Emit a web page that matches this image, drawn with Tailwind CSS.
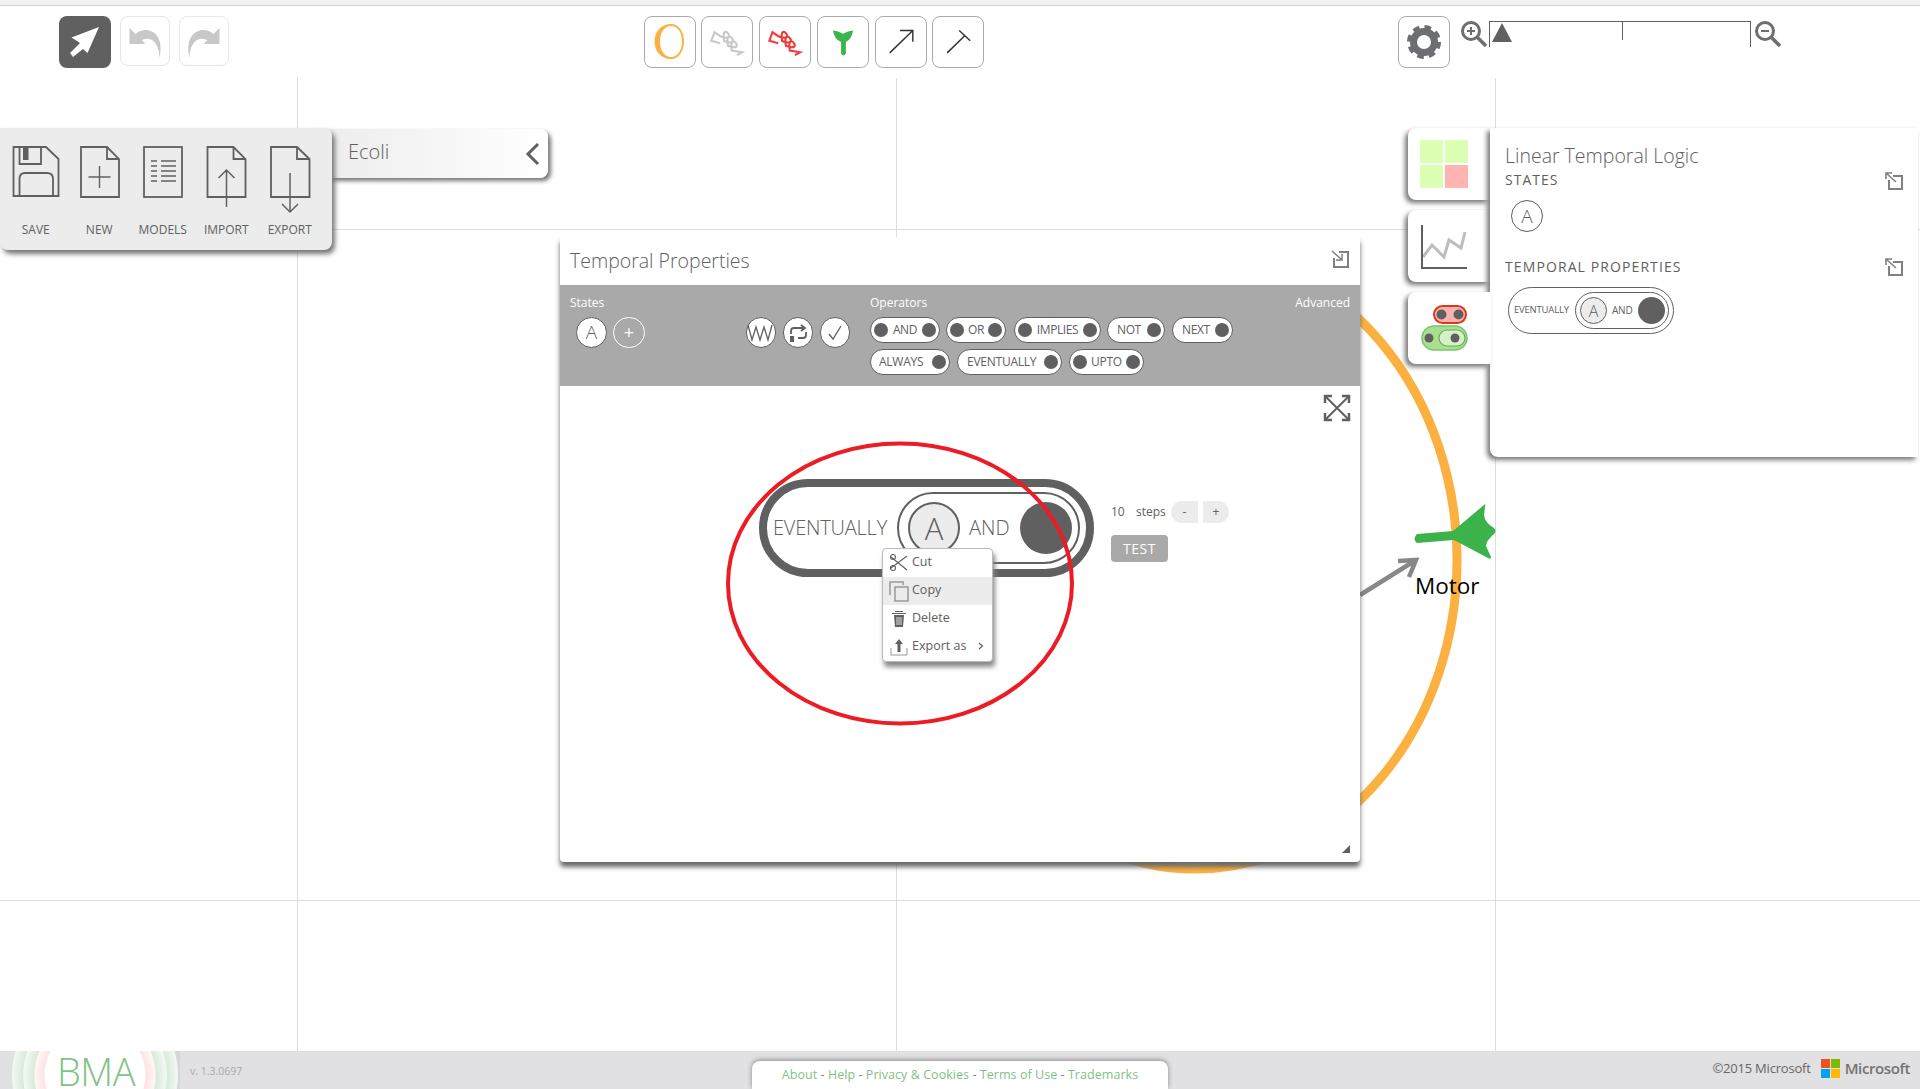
<!DOCTYPE html>
<html lang="en">
<head>
  <meta charset="utf-8" />
  <title>BMA</title>
  <script src="https://cdn.jsdelivr.net/npm/@tailwindcss/browser@4"></script>
</head>
<body class="bg-white font-['Open_Sans',sans-serif] text-[#606060]">
<div class="relative w-[1920px] h-[1089px] overflow-hidden flex flex-col">
  <!-- top strip -->
  <div class="h-[6px] shrink-0 bg-[#f1f1f1] border-b border-[#d4d4d4]"></div>

  <!-- toolbar -->
  <header class="h-[72px] shrink-0 flex items-start pt-[10px] pl-[59px]">
    <button class="w-[52px] h-[52px] rounded-lg bg-[#606060] flex items-center justify-center">
      <svg width="52" height="52" viewBox="0 0 52 52"><path d="M40 11 L12.5 21.5 L21 27 L11 37 L14 41 L24 33 L28.5 37 Z" fill="#fff"/></svg>
    </button>
    <button class="ml-[9px] w-[50px] h-[50px] rounded-lg border border-[#e6e6e6]">
      <svg width="48" height="48" viewBox="0 0 47 48"><path d="M8 11 V27 H24 Z" fill="#c8c8c8"/><path d="M14 17 C24 8 44 14 38 41 C38 25 28 18 19 24 Z" fill="#c8c8c8"/></svg>
    </button>
    <button class="ml-[9px] w-[50px] h-[50px] rounded-lg border border-[#e6e6e6]">
      <svg width="48" height="48" viewBox="0 0 47 48"><g transform="translate(47 0) scale(-1 1)"><path d="M8 11 V27 H24 Z" fill="#c8c8c8"/><path d="M14 17 C24 8 44 14 38 41 C38 25 28 18 19 24 Z" fill="#c8c8c8"/></g></svg>
    </button>

    <div class="ml-[415px] flex gap-[5px]">
      <button class="w-[52px] h-[52px] rounded-lg border border-[#aaa]">
        <svg width="50" height="50" viewBox="0 0 50 50"><path d="M26 7 C34 7 39 15 39 24.5 C39 34 34 42 26 42 C16 42 9.5 34 9.5 24.5 C9.5 15 16 7 26 7 Z M26 9 C19 9 15 16 15 24.5 C15 33 19 40 26 40 C33 40 37 33 37 24.5 C37 16 33 9 26 9 Z" fill="#fbb040" fill-rule="evenodd"/></svg>
      </button>
      <button class="w-[52px] h-[52px] rounded-lg border border-[#aaa]">
        <svg width="50" height="50" viewBox="0 0 52 52"><path d="M19 27.3 L9.7 24.7 L13 15.7 L19 20 c20.1 7.6 0.1 -17.4 4 5 c20.1 7.6 0.1 -17.4 4 5 c20.1 7.6 0.1 -17.4 4 5 L41.7 36.7 L36.3 39.7" fill="none" stroke="#c8c8c8" stroke-width="2.200"/></svg>
      </button>
      <button class="ml-[1px] w-[52px] h-[52px] rounded-lg border border-[#aaa]">
        <svg width="50" height="50" viewBox="0 0 52 52"><path d="M19 27.3 L9.7 24.7 L13 15.7 L19 20 c20.1 7.6 0.1 -17.4 4 5 c20.1 7.6 0.1 -17.4 4 5 c20.1 7.6 0.1 -17.4 4 5 L41.7 36.7 L36.3 39.7" fill="none" stroke="#ef3b3b" stroke-width="2.200"/></svg>
      </button>
      <button class="ml-[1px] w-[52px] h-[52px] rounded-lg border border-[#aaa]">
        <svg width="50" height="50" viewBox="0 0 52 52"><path d="M15.5 14 L21 15 L26 17.5 L31 15 L36.5 14 Q35 23 29 26 V38 Q26.5 42 24 38 V26 Q17 23 15.5 14 Z" fill="#39b54a"/></svg>
      </button>
      <button class="ml-[1px] w-[52px] h-[52px] rounded-lg border border-[#aaa]">
        <svg width="50" height="50" viewBox="0 0 52 52"><path d="M14.3 37.3 L38.3 14 M25 14 H38.3 V25.7" fill="none" stroke="#333" stroke-width="1.500"/></svg>
      </button>
      <button class="w-[52px] h-[52px] rounded-lg border border-[#aaa]">
        <svg width="50" height="50" viewBox="0 0 52 52"><path d="M14.7 37.3 L33 19.5 M27.3 14 L38.7 24.7" fill="none" stroke="#333" stroke-width="1.500"/></svg>
      </button>
    </div>

    <button class="ml-[414px] w-[52px] h-[52px] rounded-lg border border-[#aaa] shrink-0 flex items-center justify-center">
      <svg width="38" height="38" viewBox="0 0 38 38"><circle cx="19" cy="19" r="10.5" fill="none" stroke="#6d6e71" stroke-width="7"/><circle cx="19" cy="19" r="14.5" fill="none" stroke="#6d6e71" stroke-width="5" stroke-dasharray="6.4 5"/></svg>
    </button>
    <svg class="ml-[10px] mt-[4px] shrink-0" width="28" height="28" viewBox="0 0 28 28"><circle cx="11" cy="11" r="8.5" fill="none" stroke="#6d6e71" stroke-width="3"/><path d="M17 17 L26 26" stroke="#6d6e71" stroke-width="3.500"/><path d="M11 7 V15 M7 11 H15" stroke="#6d6e71" stroke-width="2"/></svg>
    <div class="relative ml-[1px] mt-[5px] w-[262px] h-[26px] border-t border-l border-r border-[#606060] shrink-0">
      <div class="absolute left-[2px] top-[1px] w-0 h-0 border-l-[10px] border-r-[10px] border-b-[19px] border-l-transparent border-r-transparent border-b-[#606060]"></div>
      <div class="absolute left-[132px] top-0 w-px h-[18px] bg-[#606060]"></div>
    </div>
    <svg class="ml-[3px] mt-[4px] shrink-0" width="28" height="28" viewBox="0 0 28 28"><circle cx="11" cy="11" r="8.5" fill="none" stroke="#6d6e71" stroke-width="3"/><path d="M17 17 L26 26" stroke="#6d6e71" stroke-width="3.500"/><path d="M7 11 H15" stroke="#6d6e71" stroke-width="2"/></svg>
  </header>

  <!-- free canvas -->
  <main class="relative flex-1">
    <div class="absolute left-[297px] top-0 bottom-0 w-px bg-[#dcdcdc]"></div>
    <div class="absolute left-[896px] top-0 bottom-0 w-px bg-[#dcdcdc]"></div>
    <div class="absolute left-[1495px] top-0 bottom-0 w-px bg-[#dcdcdc]"></div>
    <div class="absolute left-0 right-0 top-[151px] h-px bg-[#dcdcdc]"></div>
    <div class="absolute left-0 right-0 top-[822px] h-px bg-[#dcdcdc]"></div>

    <!-- model behind the windows -->
    <svg class="absolute left-0 top-0" width="1920" height="973" viewBox="0 78 1920 973">
      <ellipse cx="1195" cy="560" rx="262" ry="309" fill="none" stroke="#fbb040" stroke-width="9"/>
      <path d="M1360 595 L1416 560 M1398 561 L1416 560 L1409 577" fill="none" stroke="#888" stroke-width="4.500"/>
      <path d="M1417 534 L1453 531 L1484 505 Q1486 503 1485 507 L1484 515 Q1485 523 1494 528 Q1497 531 1494 534 Q1486 541 1486 546 L1491 557 Q1491 560 1488 558 L1454 540 L1417 543 Q1412 539 1417 534 Z" fill="#3bb34a"/>
    </svg>
    <div class="absolute left-[1415px] top-[493px] text-[22.5px] leading-[30px] text-black">Motor</div>

    <!-- model name tab -->
    <div class="absolute left-[310px] top-[51px] w-[238px] h-[49px] rounded-r-lg bg-gradient-to-r from-[#ececec] to-white shadow-[3px_3px_4px_#777] flex items-center pl-[38px]">
      <span class="mt-[-4px] text-[20px] font-light">Ecoli</span>
      <svg class="absolute left-[215px] top-[12px]" width="16" height="26" viewBox="0 0 16 26"><path d="M13 3 L3 13 L13 23" fill="none" stroke="#606060" stroke-width="3"/></svg>
    </div>

    <!-- file menu -->
    <nav class="absolute left-0 top-[50px] w-[332px] h-[122px] rounded-r-lg rounded-bl-lg bg-[#ececec] shadow-[3px_4px_5px_#777] flex pl-[4px] pt-[16px]">
      <div class="w-[63.5px] flex flex-col items-center">
        <svg width="64" height="72" viewBox="0 0 64 72" fill="none" stroke="#606060" stroke-width="1.800"><path d="M9.5 3 H42 L54.5 15 V52 H9.5 Z"/><path d="M15.5 3 V20 H37 V3"/><rect x="19" y="4" width="5.500" height="12" fill="#606060" stroke="none"/><path d="M15.5 52 V35 Q15.5 29 21 29 H43 Q49 29 49 35 V52"/></svg>
        <span class="mt-[7px] text-[12px] leading-[14px]">SAVE</span>
      </div>
      <div class="w-[63.5px] flex flex-col items-center">
        <svg width="64" height="72" viewBox="0 0 64 72" fill="none" stroke="#606060" stroke-width="1.800"><path d="M14 3 H40 L52 15 V53 H14 Z"/><path d="M40 3 V15 H52"/><path d="M32.5 22 V44 M21.5 33 H43.5" stroke-width="1.400"/></svg>
        <span class="mt-[7px] text-[12px] leading-[14px]">NEW</span>
      </div>
      <div class="w-[63.5px] flex flex-col items-center">
        <svg width="64" height="72" viewBox="0 0 64 72" fill="none" stroke="#606060" stroke-width="1.800"><rect x="13" y="3" width="38" height="50"/><path d="M20 17 H26 M30 17 H45 M20 22 H26 M30 22 H45 M20 27 H26 M30 27 H45 M20 32 H26 M30 32 H45 M20 37 H26 M30 37 H45" stroke-width="1.500"/></svg>
        <span class="mt-[7px] text-[12px] leading-[14px]">MODELS</span>
      </div>
      <div class="w-[63.5px] flex flex-col items-center">
        <svg width="64" height="72" viewBox="0 0 64 72" fill="none" stroke="#606060" stroke-width="1.800"><path d="M13.5 3 H39.5 L51.5 15 V53 H13.5 Z"/><path d="M39.5 3 V15 H51.5"/><path d="M32.5 26 V63 M24.5 34 L32.5 26 L40.5 34" stroke-width="1.500"/></svg>
        <span class="mt-[7px] text-[12px] leading-[14px]">IMPORT</span>
      </div>
      <div class="w-[63.5px] flex flex-col items-center">
        <svg width="64" height="72" viewBox="0 0 64 72" fill="none" stroke="#606060" stroke-width="1.800"><path d="M13 3 H39 L51.5 15 V53 H13 Z"/><path d="M39 3 V15 H51.5"/><path d="M32 29 V68 M24 60 L32 68 L40 60" stroke-width="1.500"/></svg>
        <span class="mt-[7px] text-[12px] leading-[14px]">EXPORT</span>
      </div>
    </nav>

    <!-- side tabs -->
    <div class="absolute left-[1408px] top-[50px] w-[82px] h-[72px] rounded-l-lg bg-white shadow-[-3px_3px_5px_#777] pt-[12px] pl-[12px]">
      <div class="grid grid-cols-2 gap-[2px] w-[48px]">
        <div class="h-[23px] bg-[#dcffb4]"></div>
        <div class="h-[23px] bg-[#dcffb4]"></div>
        <div class="h-[23px] bg-[#dcffb4]"></div>
        <div class="h-[23px] bg-[#ffb3b3]"></div>
      </div>
    </div>
    <div class="absolute left-[1408px] top-[132px] w-[82px] h-[72px] rounded-l-lg bg-white shadow-[-3px_3px_5px_#777]">
      <svg width="82" height="72" viewBox="0 0 82 72" fill="none"><path d="M15 47 L24 35 L36 47 L41 30 L53 38 L57 22" stroke="#bdbdbd" stroke-width="3"/><path d="M14 15 V58 H59" stroke="#606060" stroke-width="2"/></svg>
    </div>

    <!-- LTL panel -->
    <aside class="absolute left-[1490px] top-[50px] w-[428px] h-[329px] rounded-bl-lg bg-white shadow-[-3px_3px_5px_#777] pl-[15px] pr-[14px]">
      <h2 class="pt-[13px] text-[19.5px] leading-[30px] font-light">Linear Temporal Logic</h2>
      <div class="flex items-center justify-between mt-[-4px] h-[24px]">
        <span class="text-[14px] tracking-[1px]">STATES</span>
        <svg class="mt-[4px]" width="20" height="20" viewBox="0 0 20 20" fill="none" stroke="#808080" stroke-width="2"><path d="M9 5 H18 V18 H5 V9"/><path d="M2 2 L12 11 M2 8 V2 H8" stroke-width="1.600"/></svg>
      </div>
      <div class="mt-[9px] ml-[6px] w-[32px] h-[32px] rounded-full border border-[#606060] flex items-center justify-center text-[19px] font-light">A</div>
      <div class="flex items-center justify-between mt-[22px] h-[24px]">
        <span class="text-[14px] tracking-[1.1px]">TEMPORAL PROPERTIES</span>
        <svg class="mt-[2px]" width="20" height="20" viewBox="0 0 20 20" fill="none" stroke="#808080" stroke-width="2"><path d="M9 5 H18 V18 H5 V9"/><path d="M2 2 L12 11 M2 8 V2 H8" stroke-width="1.600"/></svg>
      </div>
      <div class="mt-[9px] ml-[3px] w-[166px] h-[47px] rounded-full border border-[#606060] flex items-center pl-[5px]">
        <span class="w-[61px] text-[9.5px] tracking-[-0.2px]">EVENTUALLY</span>
        <div class="w-[94px] h-[37px] rounded-full border border-[#606060] flex items-center pl-[4px]">
          <div class="w-[27px] h-[27px] rounded-full border border-[#606060] bg-[#ececec] flex items-center justify-center text-[16px] font-light">A</div>
          <span class="ml-[5px] w-[26px] text-[10px] tracking-[-0.2px]">AND</span>
          <div class="w-[27px] h-[27px] rounded-full bg-[#606060]"></div>
        </div>
      </div>
    </aside>

    <!-- active tab sits over the panel edge -->
    <div class="absolute left-[1408px] top-[214px] w-[83px] h-[72px] rounded-l-lg bg-white shadow-[-3px_3px_5px_#777]">
      <svg width="82" height="72" viewBox="0 0 82 72"><rect x="26" y="14" width="32" height="17" rx="8.5" fill="#ffb0b0" stroke="#d83a1a" stroke-width="2"/><circle cx="33.5" cy="22.5" r="5" fill="#606060"/><circle cx="50.5" cy="22.5" r="5" fill="#606060"/><rect x="14" y="34" width="45" height="24" rx="12" fill="#a8e08f" stroke="#7ac36a" stroke-width="1.500"/><rect x="31" y="38" width="26" height="16" rx="8" fill="#d4f2c4" stroke="#6da85c" stroke-width="1.200"/><circle cx="21" cy="46" r="4.500" fill="#606060"/><circle cx="47" cy="46" r="4.500" fill="#606060"/></svg>
    </div>

    <!-- temporal properties window -->
    <section class="absolute left-[560px] top-[159px] w-[800px] h-[625px] bg-white rounded-b shadow-[0_5px_5px_#666] flex flex-col">
      <div class="h-[48px] shrink-0 flex items-center justify-between pl-[10px] pr-[10px]">
        <h2 class="text-[19.5px] font-light">Temporal Properties</h2>
        <svg class="mt-[-5px]" width="20" height="20" viewBox="0 0 20 20" fill="none" stroke="#808080" stroke-width="2"><path d="M9 3 H18 V18 H4 V9"/><path d="M2 2 L12 11 M12 5 V11 H6" stroke-width="1.500"/></svg>
      </div>

      <div class="h-[101px] shrink-0 bg-[#a9a9a9] flex pl-[10px] text-white">
        <div class="w-[176px] pt-[11px]">
          <div class="text-[12px] leading-[14px]">States</div>
          <div class="flex gap-[6px] mt-[7px] ml-[6px]">
            <div class="w-[31px] h-[31px] rounded-full bg-white border border-[#606060] flex items-center justify-center text-[19px] font-light text-[#606060]">A</div>
            <div class="w-[32px] h-[31px] rounded-full border border-white flex items-center justify-center text-[18px]">+</div>
          </div>
        </div>
        <div class="w-[124px] pt-[32px] flex gap-[7px]">
          <div class="w-[30px] h-[31px] rounded-full bg-white border border-[#606060] flex items-center justify-center">
            <svg width="28" height="20" viewBox="0 0 28 20" fill="none" stroke="#606060" stroke-width="1.300"><path d="M1 2 L5 17 L9 4 L13 17 L17 4 L21 17 L25 2"/></svg>
          </div>
          <div class="w-[30px] h-[31px] rounded-full bg-white border border-[#606060] flex items-center justify-center">
            <svg width="22" height="22" viewBox="0 0 22 22" fill="none" stroke="#606060" stroke-width="1.800"><path d="M4 12 V9 Q4 6 7 6 H17 M14 3 L18 6 L14 9"/><path d="M19 10 V13 Q19 16 16 16 H11"/><rect x="3" y="14" width="4" height="6" fill="#606060" stroke="none"/></svg>
          </div>
          <div class="w-[30px] h-[31px] rounded-full bg-white border border-[#606060] flex items-center justify-center">
            <svg width="18" height="18" viewBox="0 0 18 18" fill="none" stroke="#606060" stroke-width="1.300"><path d="M3 10 L7 15 L15 2"/></svg>
          </div>
        </div>
        <div class="w-[400px] pt-[11px]">
          <div class="text-[12px] leading-[14px]">Operators</div>
          <div class="flex gap-[6px] mt-[7px] h-[27px] text-[12px] tracking-[-0.4px] text-[#606060]">
            <div class="w-[70px] h-[26px] rounded-full bg-white border border-[#606060] flex items-center justify-between px-[3px]"><span class="w-[14px] h-[14px] rounded-full bg-[#606060]"></span>AND<span class="w-[14px] h-[14px] rounded-full bg-[#606060]"></span></div>
            <div class="w-[60px] h-[26px] rounded-full bg-white border border-[#606060] flex items-center justify-between px-[3px]"><span class="w-[14px] h-[14px] rounded-full bg-[#606060]"></span>OR<span class="w-[14px] h-[14px] rounded-full bg-[#606060]"></span></div>
            <div class="ml-[2px] w-[87px] h-[26px] rounded-full bg-white border border-[#606060] flex items-center justify-between px-[3px]"><span class="w-[14px] h-[14px] rounded-full bg-[#606060]"></span>IMPLIES<span class="w-[14px] h-[14px] rounded-full bg-[#606060]"></span></div>
            <div class="w-[58px] h-[26px] rounded-full bg-white border border-[#606060] flex items-center justify-between pl-[9px] pr-[3px]">NOT<span class="w-[14px] h-[14px] rounded-full bg-[#606060]"></span></div>
            <div class="ml-[1px] w-[61px] h-[26px] rounded-full bg-white border border-[#606060] flex items-center justify-between pl-[9px] pr-[3px]">NEXT<span class="w-[14px] h-[14px] rounded-full bg-[#606060]"></span></div>
          </div>
          <div class="flex gap-[7px] mt-[5px] text-[12px] tracking-[-0.25px] text-[#606060]">
            <div class="w-[80px] h-[26px] rounded-full bg-white border border-[#606060] flex items-center justify-between pl-[8px] pr-[3px]">ALWAYS<span class="w-[14px] h-[14px] rounded-full bg-[#606060]"></span></div>
            <div class="w-[105px] h-[26px] rounded-full bg-white border border-[#606060] flex items-center justify-between pl-[9px] pr-[3px]">EVENTUALLY<span class="w-[14px] h-[14px] rounded-full bg-[#606060]"></span></div>
            <div class="w-[75px] h-[26px] rounded-full bg-white border border-[#606060] flex items-center justify-between px-[3px]"><span class="w-[14px] h-[14px] rounded-full bg-[#606060]"></span>UPTO<span class="w-[14px] h-[14px] rounded-full bg-[#606060]"></span></div>
          </div>
        </div>
        <div class="ml-auto pt-[11px] pr-[10px] text-[12px] leading-[14px]">Advanced</div>
      </div>

      <div class="relative flex-1">
        <svg class="absolute left-[763px] top-[8px]" width="28" height="28" viewBox="0 0 28 28" fill="none" stroke="#606060" stroke-width="2"><path d="M2 2 L26 26 M26 2 L2 26"/><path d="M2 9 V2 H9 M19 2 H26 V9 M26 19 V26 H19 M9 26 H2 V19" stroke-width="2.500"/></svg>

        <!-- big formula -->
        <div class="absolute left-[199px] top-[93px] w-[335px] h-[98px] rounded-full border-[8px] border-[#606060] flex items-center pl-[6px]">
          <span class="w-[124px] text-[20px] font-light tracking-[-0.2px]">EVENTUALLY</span>
          <div class="w-[183px] h-[72px] rounded-full border-2 border-[#606060] flex items-center pl-[9px]">
            <div class="w-[52px] h-[52px] rounded-full border-2 border-[#606060] bg-[#ececec] flex items-center justify-center text-[31px] font-light">A</div>
            <span class="ml-[9px] w-[51px] text-[20px] font-light">AND</span>
            <div class="w-[52px] h-[52px] rounded-full bg-[#606060]"></div>
          </div>
        </div>

        <!-- steps and test -->
        <div class="absolute left-[551px] top-[115px]">
          <div class="flex items-center h-[22px] text-[12px]">
            <span class="w-[25px]">10</span>
            <span class="w-[35px]">steps</span>
            <button class="w-[27px] h-[22px] rounded-l-full bg-[#ececec]">-</button>
            <button class="ml-[5px] w-[26px] h-[22px] rounded-r-full bg-[#ececec]">+</button>
          </div>
          <div class="mt-[12px] w-[57px] h-[27px] rounded bg-[#a9a9a9] text-white text-[14px] tracking-[0.5px] flex items-center justify-center">TEST</div>
        </div>

        <!-- context menu -->
        <ul class="absolute left-[322px] top-[162px] w-[111px] rounded bg-white border border-[#bbb] shadow-[2px_5px_5px_#888] text-[12.5px]">
          <li class="relative h-[28px] flex items-center pl-[29px] pb-[2px]">
            <svg class="absolute left-[6px] top-[5px]" width="20" height="18" viewBox="0 0 20 18" fill="none" stroke="#606060" stroke-width="1.100"><path d="M2 3 L18 16 M18 2 L2 14"/><circle cx="4" cy="3" r="2.500"/><circle cx="4" cy="14" r="2.500"/></svg>
            Cut
          </li>
          <li class="relative h-[28px] flex items-center pl-[29px] pb-[2px] bg-[#ececec]">
            <svg class="absolute left-[6px] top-[4px]" width="20" height="21" viewBox="0 0 20 21" fill="none" stroke="#999" stroke-width="1.500"><path d="M1 14 V1 H14 V4"/><rect x="6" y="6" width="13" height="14"/></svg>
            Copy
          </li>
          <li class="relative h-[28px] flex items-center pl-[29px] pb-[2px]">
            <svg class="absolute left-[9px] top-[6px]" width="14" height="17" viewBox="0 0 14 17"><path d="M0 2 H14 V3 H0 Z M3 0 H11 V1 H3 Z" fill="#606060"/><path d="M2 4 H12 L11 16 H3 Z" fill="#606060"/><path d="M5 6 V14 M7 6 V14 M9 6 V14" stroke="#fff" stroke-width="0.800"/></svg>
            Delete
          </li>
          <li class="relative h-[28px] flex items-center pl-[29px] pb-[2px]">
            <svg class="absolute left-[7px] top-[5px]" width="18" height="18" viewBox="0 0 18 18" fill="none"><path d="M1 10 V17 H17 V10" stroke="#999" stroke-width="1"/><path d="M9 1 L13 6 H10.5 V14 H7.5 V6 H5 Z" fill="#606060"/></svg>
            Export as
            <svg class="absolute left-[95px] top-[9px]" width="6" height="8" viewBox="0 0 6 8" fill="none" stroke="#606060" stroke-width="1.200"><path d="M1 1 L4.5 4 L1 7"/></svg>
          </li>
        </ul>

        <svg class="absolute left-[782px] top-[459px]" width="8" height="8" viewBox="0 0 8 8"><path d="M8 0 V8 H0 Z" fill="#606060"/></svg>
      </div>
    </section>

    <!-- hand-drawn highlight -->
    <svg class="absolute left-0 top-0 pointer-events-none" width="1920" height="973" viewBox="0 78 1920 973">
      <ellipse cx="900" cy="583.5" rx="172" ry="140" fill="none" stroke="#ed1c24" stroke-width="4"/>
    </svg>
  </main>

  <!-- footer -->
  <footer class="relative h-[38px] shrink-0 bg-[#e1e1e3] flex items-start overflow-hidden">
    <div class="relative w-[180px] h-[38px] shrink-0">
      <svg class="absolute left-0 top-0" width="180" height="38" viewBox="0 0 180 38">
        <defs>
          <radialGradient id="rings" gradientUnits="userSpaceOnUse" cx="95" cy="24" r="83">
            <stop offset="0.6" stop-color="#fff"/>
            <stop offset="0.615" stop-color="#ffe3e3"/>
            <stop offset="0.725" stop-color="#fff6f6"/>
            <stop offset="0.735" stop-color="#d8ead9"/>
            <stop offset="0.86" stop-color="#f4f8f4"/>
            <stop offset="0.87" stop-color="#d8ead9"/>
            <stop offset="1" stop-color="#f4f8f4"/>
          </radialGradient>
        </defs>
        <rect x="170" width="10" height="38" fill="#d6d6d8"/>
        <circle cx="95" cy="24" r="83" fill="url(#rings)"/>
      </svg>
      <span class="absolute left-[57px] top-[5px] text-[38px] leading-[30px] font-light tracking-[-0.5px] text-[#7fc285]">BMA</span>
    </div>
    <div class="w-[572px] shrink-0 pt-[13px] pl-[10px] text-[10.5px] leading-[14px] text-[#aaa]">v. 1.3.0697</div>
    <nav class="mt-[10px] w-[416px] h-[28px] shrink-0 rounded-t-lg bg-white shadow-[0_-1px_5px_#888] flex items-center justify-center text-[12.5px] tracking-[0.05px] text-[#7fc285] whitespace-pre">
      <span>About</span><span class="text-[#808080]"> - </span><span>Help</span><span class="text-[#808080]"> - </span><span>Privacy &amp; Cookies</span><span class="text-[#808080]"> - </span><span>Terms of Use</span><span class="text-[#808080]"> - </span><span>Trademarks</span>
    </nav>
    <div class="ml-auto pr-[10px] pt-[6px] flex items-center">
      <span class="text-[13px] tracking-[-0.2px] text-[#666]">©2015 Microsoft</span>
      <div class="ml-[10px] grid grid-cols-2 gap-px w-[19px] h-[19px]">
        <div class="bg-[#f25022]"></div><div class="bg-[#7fba00]"></div>
        <div class="bg-[#00a4ef]"></div><div class="bg-[#ffb900]"></div>
      </div>
      <span class="ml-[5px] text-[15px] font-semibold tracking-[-0.4px] text-[#737373]">Microsoft</span>
    </div>
  </footer>
</div>
</body>
</html>
